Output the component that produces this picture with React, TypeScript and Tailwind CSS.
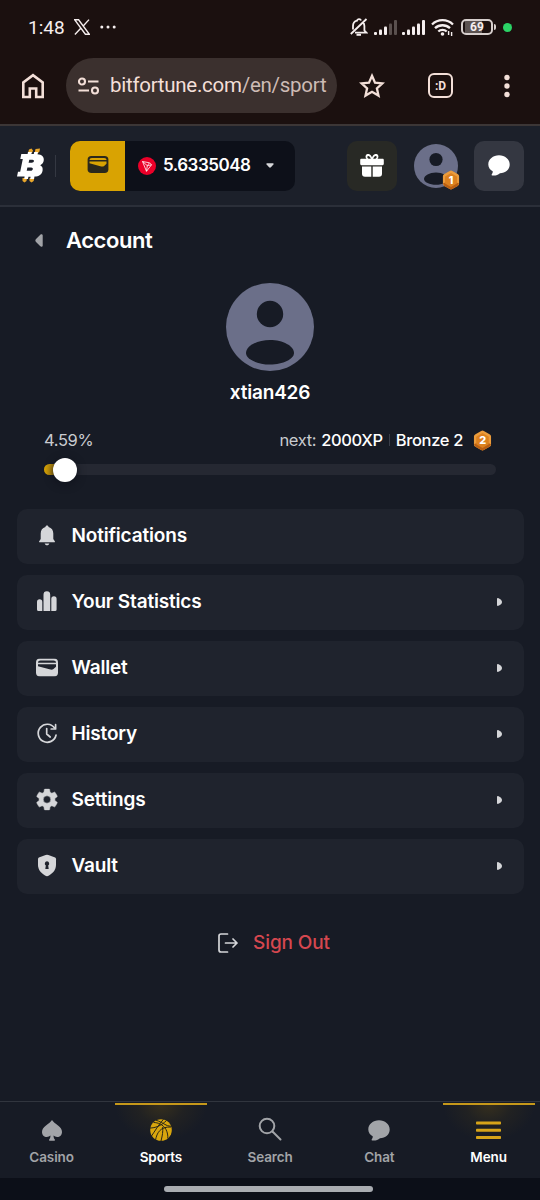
import type { ReactNode } from "react";

function Hexagon({ level, className }: { level: number; className: string }) {
    return (
        <svg viewBox="0 0 20 22" className={className}>
            <path d="M8.600.9a2.600 2.600 0 0 1 2.800 0l6 3.400A2.600 2.600 0 0 1 19 6.800v8.400a2.600 2.600 0 0 1-1.600 2.400l-6 3.500a2.600 2.600 0 0 1-2.800 0l-6-3.500A2.600 2.600 0 0 1 1 15.200V6.800a2.600 2.600 0 0 1 1.600-2.500z" fill="#eb9c3c" />
            <path d="M1 15l9-4 9 4-1.600 2.600-6 3.500a2.600 2.600 0 0 1-2.800 0l-6-3.500z" fill="#b95f12" />
            <path d="M10 3.200l6.600 3.800v8L10 18.800 3.400 15V7z" fill="#dc811f" />
            <text x="10" y="15" textAnchor="middle" fontSize="11.500" fontWeight="800" fontFamily="Inter, sans-serif" fill="#fff">{level}</text>
        </svg>
    );
}

function Avatar({ className }: { className: string }) {
    return (
        <svg viewBox="0 0 88 88" className={className}>
            <circle cx="44" cy="44" r="44" fill="#6b6f89" />
            <circle cx="44" cy="31" r="13.200" fill="#171b25" />
            <path d="M44 57c13 0 24 6 24 13 0 6-11 11.500-24 11.500S20 76 20 70c0-7 11-13 24-13z" fill="#171b25" />
        </svg>
    );
}

function WalletIcon({ fill, inner, className }: { fill: string; inner: string; className: string }) {
    return (
        <svg viewBox="0 0 22 18" className={className}>
            <rect width="22" height="18" rx="4" fill={fill} />
            <path d="M2 4.300C2 2.900 3 2 4.500 2h13C19 2 20 2.900 20 4.300z" fill={inner} />
            <path d="M2 5.800h18v2.400L17.500 10.500c-1 .7-2 .8-3.100.5L2 7.800z" fill={inner} />
        </svg>
    );
}

function ChatIcon({ className }: { className: string }) {
    return (
        <svg viewBox="0 0 22 21" className={className} fill="currentColor">
            <path d="M11 .3c6 0 10.700 4 10.700 9.100S17.500 18 12 18.200c-2.200 2-5 2.600-7.800 2.200-.7-.1-.8-.7-.4-1.200.7-.9 1.100-1.900.9-3C2 14.700.3 12.300.3 9.400.3 4.300 5 .3 11 .3z" />
        </svg>
    );
}

const menuItems: { label: string; arrow: boolean; icon: ReactNode }[] = [
    {
        label: "Notifications",
        arrow: false,
        icon: (
            <svg viewBox="0 0 22 22" className="h-[22px] w-[22px]" fill="#d5d6d9">
                <path d="M11 1c.9 0 1.500.6 1.600 1.500 3 .8 4.700 3.300 4.700 6.500v5.500l1.500 2.200c.4.600.1 1.100-.5 1.100H3.700c-.6 0-.9-.5-.5-1.100l1.500-2.200V9c0-3.200 1.700-5.700 4.700-6.500C9.500 1.600 10.100 1 11 1z" />
                <path d="M8.700 18.900h4.600c-.2 1.200-1.100 1.800-2.300 1.800s-2.100-.6-2.300-1.800z" />
            </svg>
        ),
    },
    {
        label: "Your Statistics",
        arrow: true,
        icon: (
            <svg viewBox="0 0 22 22" className="h-[22px] w-[22px]" fill="#d5d6d9">
                <path d="M1 11.500a2.600 2.600 0 0 1 5.300 0V20.500H2.500q-1.500 0-1.500-1.500zM7.500 4.200a3.300 3.300 0 0 1 6.700 0v16.300H7.500zM15.300 8.300a2.600 2.600 0 0 1 5.300 0V19q0 1.500-1.500 1.500h-3.800z" />
            </svg>
        ),
    },
    { label: "Wallet", arrow: true, icon: <WalletIcon fill="#d5d6d9" inner="#1f232d" className="h-[18px] w-[22px]" /> },
    {
        label: "History",
        arrow: true,
        icon: (
            <svg viewBox="0 0 22 22" className="h-[22px] w-[22px]" fill="none" stroke="#d5d6d9" strokeWidth="1.700" strokeLinecap="round" strokeLinejoin="round">
                <path d="M18.600 5.600A9 9 0 1 0 20 12.700" />
                <path d="M19.600 2.200v4.300h-4.400M10.700 6v5.500l3.500 3" />
            </svg>
        ),
    },
    {
        label: "Settings",
        arrow: true,
        icon: (
            <svg viewBox="2 2 20 20" className="h-[22px] w-[22px]" fill="#d5d6d9" stroke="#d5d6d9" strokeWidth=".5" strokeLinejoin="round">
                <path d="M19.140 12.940c.04-.3.060-.61.060-.94 0-.32-.02-.64-.07-.94l2.030-1.580a.49.49 0 0 0 .12-.61l-1.920-3.320a.488.488 0 0 0-.59-.22l-2.390.96c-.5-.38-1.030-.7-1.620-.94l-.36-2.540a.484.484 0 0 0-.48-.41h-3.840c-.24 0-.43.17-.47.41l-.36 2.540c-.59.24-1.130.57-1.620.94l-2.390-.96c-.22-.08-.47 0-.59.22L2.740 8.870c-.12.21-.08.47.12.61l2.030 1.580c-.05.3-.09.63-.09.94s.02.64.07.94l-2.030 1.580a.49.49 0 0 0-.12.61l1.920 3.320c.12.22.37.29.59.22l2.390-.96c.5.38 1.030.7 1.620.94l.36 2.540c.05.24.24.41.48.41h3.840c.24 0 .44-.17.47-.41l.36-2.540c.59-.24 1.130-.56 1.620-.94l2.390.96c.22.08.47 0 .59-.22l1.920-3.320a.49.49 0 0 0-.12-.61zM12 15.400A3.400 3.400 0 1 1 12 8.600a3.400 3.400 0 0 1 0 6.800z" />
            </svg>
        ),
    },
    {
        label: "Vault",
        arrow: true,
        icon: (
            <svg viewBox="0 0 22 22" className="h-[22px] w-[22px]">
                <path d="M11 0l7.500 2.700c1 .4 1.500 1 1.500 2.100v5.700c0 5-3.500 9-9 11.500-5.500-2.500-9-6.500-9-11.500V4.800c0-1.100.5-1.700 1.500-2.100z" fill="#d5d6d9" />
                <path d="M11 6.800a2.300 2.300 0 0 1 1.200 4.200l.5 3.500H9.300l.5-3.500A2.300 2.300 0 0 1 11 6.800z" fill="#1f232d" />
            </svg>
        ),
    },
];

const tabs: { label: string; active: boolean; icon: ReactNode }[] = [
    {
        label: "Casino",
        active: false,
        icon: (
            <svg viewBox="0 0 20 21" className="h-[21px] w-5" fill="#a2a4a8">
                <path d="M10 0c1 1.600 3.500 3.600 6 5.600 2.600 2 4 3.900 4 6.400 0 3-2.100 5-4.800 5-1.500 0-2.700-.5-3.700-1.400.1 2 .5 3.200 1.300 4 .5.500.2 1.200-.5 1.200H7.700c-.7 0-1-.7-.5-1.200.8-.8 1.200-2 1.300-4-1 .9-2.200 1.400-3.700 1.400C2.100 17 0 15 0 12c0-2.500 1.400-4.400 4-6.400 2.500-2 5-4 6-5.600z" />
            </svg>
        ),
    },
    {
        label: "Sports",
        active: true,
        icon: (
            <svg viewBox="0 0 22 22" className="h-[22px] w-[22px]">
                <circle cx="11" cy="11" r="10.800" fill="#d9a60d" />
                <path d="M3.500 3.500C8 3.500 13 5.500 16 10.500c1.500 3 2 6 1.800 9M0 9c5 0 11-2 16.500-7.500M6 1.200c3.500 1 7.500 3.500 10 4.800 2 1 4 1.300 6 1.200M1.500 17C5 12 8 6.500 13.500.2M5.500 21C7 14 10 7.500 21 8M11 22c1.500-6 2-9 1.700-14" fill="none" stroke="#292618" strokeWidth="1" />
            </svg>
        ),
    },
    {
        label: "Search",
        active: false,
        icon: (
            <svg viewBox="0 0 24 24" className="h-6 w-6 -translate-y-px" fill="none" stroke="#a2a4a8" strokeWidth="2" strokeLinecap="round">
                <circle cx="9" cy="9" r="7.300" />
                <path d="M14.500 14.500l8 8" />
            </svg>
        ),
    },
    { label: "Chat", active: false, icon: <ChatIcon className="h-[21px] w-[22px] text-[#a2a4a8]" /> },
    {
        label: "Menu",
        active: true,
        icon: (
            <svg viewBox="0 0 25 19" className="h-[19px] w-[25px]" fill="#d7a419">
                <rect width="25" height="3" rx=".8" y=".5" />
                <rect width="25" height="3" rx=".8" y="7.700" />
                <rect width="25" height="3" rx=".8" y="15" />
            </svg>
        ),
    },
];

function StatusBar() {
    return (
        <div className="flex h-[54px] items-center pl-7 pr-7 text-[#f5eeee]">
            <span className="w-[37px] whitespace-nowrap font-['Roboto'] text-[19px] leading-none">1:48</span>
            <svg viewBox="0 0 16 16" className="ml-[9px] h-4 w-4" fill="none" stroke="currentColor" strokeWidth="1.400">
                <path d="M.8.800h3.800l10.600 14.400h-3.800zM15 .6L9 7.300M7 9L.9 15.500" />
            </svg>
            <svg viewBox="0 0 16 4" className="ml-[10px] h-1 w-4" fill="currentColor">
                <circle cx="1.800" cy="2" r="1.500" />
                <circle cx="8" cy="2" r="1.500" />
                <circle cx="14.200" cy="2" r="1.500" />
            </svg>
            <div className="ml-auto flex items-center">
                <svg viewBox="0 0 18 18" className="h-[18px] w-[18px]" fill="none" stroke="currentColor" strokeWidth="1.800">
                    <path d="M3 11.500V8c0-3 1.600-4.700 4-5.300C7.200.8 10.500.6 11 2.500M13 4.500c1 1 1.400 2 1.400 3.500v4.500l2 2.200H5M.8 16L16.500 1" />
                    <path d="M6.500 16.800h4.500" strokeWidth="2" />
                </svg>
                <svg viewBox="0 0 23 15" className="ml-[6px] h-[15px] w-[23px]" fill="currentColor">
                    <rect x="0" y="12" width="3" height="3" rx="1" />
                    <rect x="5" y="9.500" width="3" height="5.500" rx="1" />
                    <rect x="10" y="6.500" width="3" height="8.500" rx="1" />
                    <rect x="15" y="3.500" width="3" height="11.500" rx="1" fill="#5a504e" />
                    <rect x="20" y="0" width="3" height="15" rx="1" fill="#5a504e" />
                </svg>
                <svg viewBox="0 0 23 15" className="ml-[5px] h-[15px] w-[23px]" fill="currentColor">
                    <rect x="0" y="12" width="3" height="3" rx="1" />
                    <rect x="5" y="9.500" width="3" height="5.500" rx="1" />
                    <rect x="10" y="6.500" width="3" height="8.500" rx="1" />
                    <rect x="15" y="3.500" width="3" height="11.500" rx="1" />
                    <rect x="20" y="0" width="3" height="15" rx="1" />
                </svg>
                <svg viewBox="0 0 23 17" className="ml-[6px] h-[17px] w-[23px]" fill="none" stroke="currentColor" strokeWidth="2.300">
                    <path d="M1 5.500a15 15 0 0 1 21 0M4 9.200a11 11 0 0 1 15 0M7.300 12.500a6 6 0 0 1 8.400 0" />
                    <circle cx="11.500" cy="15" r="1.800" fill="currentColor" stroke="none" />
                    <path d="M17.600 12v4M20.600 13v4" strokeWidth="1.400" />
                </svg>
                <div className="ml-[7px] flex h-4 w-8 items-center justify-center rounded-[5px] border-2 border-[#d7cfcd] bg-[linear-gradient(90deg,#1b100f_2px,#5b5250_2px,#5b5250_19px,#1b100f_19px)] font-['Roboto'] text-[12px] font-bold leading-none">69</div>
                <div className="ml-px h-[6px] w-[2px] rounded-r bg-[#d7cfcd]" />
            </div>
            <div className="ml-[7px] h-[9px] w-[9px] rounded-full bg-[#2bd466]" />
        </div>
    );
}

function BrowserBar() {
    return (
        <div className="flex h-[70px] items-center pt-[1px] pb-[8px] text-[#f3dfd8]">
            <svg viewBox="0 0 24 26" className="ml-[21px] h-[26px] w-6 shrink-0" fill="none" stroke="currentColor" strokeWidth="2.600">
                <path d="M2.300 24V9.500L12 2.200l9.700 7.300V24h-6.500v-8.500H8.800V24z" />
            </svg>
            <div className="ml-[21px] flex h-[55px] w-[271px] shrink-0 items-center rounded-full bg-[#3b302e] pl-3">
                <svg viewBox="0 0 22 18" className="h-[18px] w-[22px] shrink-0" fill="none" stroke="currentColor" strokeWidth="2.100">
                    <circle cx="4" cy="4.500" r="3" />
                    <path d="M10 4.500h10.500M.5 13.500H11" />
                    <circle cx="17" cy="13.500" r="3" />
                </svg>
                <span className="ml-[10px] whitespace-nowrap font-['Roboto'] text-[20.500px] tracking-[-0.270px]">
                    bitfortune.com<span className="text-[#cdbbb5]">/en/sport</span>
                </span>
            </div>
            <svg viewBox="0 0 26 26" className="ml-[22px] h-[26px] w-[26px] shrink-0" fill="none" stroke="currentColor" strokeWidth="2.300">
                <path d="M13 2.800l3 6.800 7.500.7-5.600 5 1.600 7.300-6.500-3.800-6.500 3.800 1.600-7.300-5.600-5 7.500-.7z" />
            </svg>
            <div className="ml-[43px] flex h-[25px] w-[25px] shrink-0 items-center justify-center rounded-[6px] border-2 border-[#f3dfd8] font-['Roboto'] text-[12px] font-bold leading-none">:D</div>
            <svg viewBox="0 0 6 24" className="ml-[51px] h-6 w-[6px] shrink-0" fill="currentColor">
                <circle cx="3" cy="3.500" r="2.700" />
                <circle cx="3" cy="12" r="2.700" />
                <circle cx="3" cy="20.500" r="2.700" />
            </svg>
        </div>
    );
}

function SiteHeader() {
    return (
        <header className="flex h-[83px] items-center border-y-2 border-t-[#3c3636] border-b-[#2b2f39] bg-[#1c202a] pl-[17px]">
            <svg viewBox="0 0 27 35" className="h-[35px] w-[27px] shrink-0">
                <path d="M12 1.500L14.500.5l1.500 2-1 2.500h-4zM18.500 1l4.500-.5-.5 3-2 2h-3zM5.500 30h4.500l-.5 3-2 1.500-2-1.500zM12.500 30h4.700l-.5 3-2.200 1.500-2-1.500z" fill="#e9a72c" />
                <path d="M11 4h3.800l-.4 2h2.400l.4-2h3.800l-.5 2.200c4.200.3 6.500 2.300 6.300 5.800-.2 2.600-1.500 4.300-3.600 5.200 2 1 2.800 2.700 2.400 5.300-.7 4-3.600 6-8.100 6.100l-.5 2.300h-3.800l.4-2.200h-2.200l-.4 2.200H7.200l.4-2.300H0l1-4.900h2.200l2.600-12.800H3.300l1-4.800H10.600zM12.300 11.800l-.7 3h3.200c2.500 0 3-3 .7-3zM10.400 19.500l-.7 3.300h3.900c2.600 0 3.100-3.300.6-3.300z" fill="#fff" fillRule="evenodd" />
            </svg>
            <div className="ml-[11px] h-[22px] w-px shrink-0 bg-[#343842]" />
            <div className="ml-[14px] flex h-[50px] w-[225px] shrink-0 overflow-hidden rounded-[10px] bg-[#0d1019]">
                <div className="flex w-[55px] items-center justify-center bg-[#d9a302]">
                    <WalletIcon fill="#2b281c" inner="#d9a302" className="h-[17px] w-[22px] -translate-y-px" />
                </div>
                <div className="flex flex-1 items-center pl-[13px]">
                    <svg viewBox="0 0 18 18" className="h-[18px] w-[18px]">
                        <circle cx="9" cy="9" r="9" fill="#eb0029" />
                        <path d="M4.500 4.500l7 1.300 2 2-5 6.500zl4.800 4.200-.8 5.600M9.300 8.700l2.200-2.900M9.300 8.700l4.200-.9" fill="none" stroke="#fff" strokeWidth=".8" strokeLinejoin="round" />
                    </svg>
                    <span className="ml-[7px] w-[87px] whitespace-nowrap text-[17px] font-semibold leading-none tracking-[-0.500px]">5.6335048</span>
                    <svg viewBox="0 0 9 6" className="ml-[16px] h-[5px] w-[8px]" fill="#d6d7da">
                        <path d="M1 .2h7c1 0 1.300.9.6 1.600L5.600 5.200c-.6.700-1.600.700-2.200 0L.4 1.800C-.3 1.100 0 .2 1 .2z" />
                    </svg>
                </div>
            </div>
            <div className="ml-[52px] flex h-[50px] w-[50px] shrink-0 items-center justify-center rounded-[10px] bg-[#282925]">
                <svg viewBox="0 0 24 24" className="h-6 w-6 -translate-y-px" fill="#fff">
                    <path d="M6.500 6C4 2.500 7 .3 9.300 1.300c1.300.5 2.200 1.700 2.700 3.200.5-1.500 1.400-2.700 2.700-3.200C17 .3 20 2.500 17.500 6h-2.200c2.700-2 .7-4-.8-2.500-.8.700-1.200 1.600-1.300 2.500h-2.400c-.1-.9-.5-1.800-1.300-2.500C8 2 6 4 8.700 6z" />
                    <path d="M1.500 5.700h21c.8 0 1.300.5 1.300 1.300v3.800c0 .8-.5 1.400-1.300 1.400h-21c-.8 0-1.300-.6-1.300-1.400V7c0-.8.5-1.300 1.300-1.300zM2 13.400h9.300v10.300H5c-2 0-3-1-3-3zM12.700 13.400H22v7.300c0 2-1 3-3 3h-6.300z" />
                </svg>
            </div>
            <div className="relative ml-[17px] shrink-0">
                <Avatar className="h-[44px] w-[44px]" />
                <Hexagon level={1} className="absolute -right-[2px] -bottom-[2px] h-5 w-[18px]" />
            </div>
            <div className="ml-[16px] flex h-[50px] w-[50px] shrink-0 items-center justify-center rounded-[10px] bg-[#343741]">
                <ChatIcon className="h-[21px] w-[22px] text-white" />
            </div>
        </header>
    );
}

export default function App() {
    return (
        <div className="flex h-[1200px] w-[540px] flex-col overflow-hidden bg-[#171b25] font-['Inter',sans-serif] text-white">
            <div className="h-[124px] shrink-0 bg-[#1b100f]">
                <StatusBar />
                <BrowserBar />
            </div>
            <SiteHeader />

            <main className="flex-1">
                <div className="flex h-[66px] items-center pl-[35px]">
                    <svg viewBox="0 0 8 14" className="h-[13px] w-2" fill="#a1a3a7">
                        <path d="M8 1.700v10.600c0 1.500-1.500 2-2.600 1L.8 8.700c-1-.9-1-2.500 0-3.400L5.400.7C6.500-.3 8 .2 8 1.700z" />
                    </svg>
                    <h1 className="ml-[23px] text-[22px] font-semibold tracking-[-0.450px]">Account</h1>
                </div>

                <div className="flex flex-col items-center pt-[10px]">
                    <Avatar className="h-[88px] w-[88px]" />
                    <p className="mt-2 text-[19px] font-semibold leading-7 tracking-[-0.200px]">xtian426</p>
                </div>

                <div className="mx-11 mt-[21px]">
                    <div className="flex h-6 items-center text-[16.500px] tracking-[-0.350px]">
                        <span className="text-[#c9cbd0]">4.59%</span>
                        <span className="ml-auto text-[#c9cbd0]">next:</span>
                        <span className="ml-[5px] font-medium">2000XP</span>
                        <span className="mx-[6px] h-3 w-px bg-[#3a3e49]" />
                        <span className="font-medium">Bronze 2</span>
                        <Hexagon level={2} className="mr-[4px] ml-[10px] h-[21px] w-[19px]" />
                    </div>
                    <div className="relative mt-3 h-[11px] rounded-full bg-[#252832]">
                        <div className="h-full w-5 rounded-l-full bg-linear-to-r from-[#d9a302] to-[#8b6b12]" />
                        <div className="absolute -top-[6px] left-[9px] h-6 w-6 rounded-full bg-white shadow-[0_2px_8px_#10131c]" />
                    </div>
                </div>

                <nav className="mt-[33.500px] flex flex-col gap-[11px] px-[16.500px]">
                    {menuItems.map((item) => (
                        <div key={item.label} className="flex h-[55px] items-center rounded-[10px] bg-[#1f232d] pr-[22px] pl-[19.500px]">
                            <div className="flex w-[22px] -translate-y-[0.500px] justify-center">{item.icon}</div>
                            <span className="ml-[13.500px] pt-px text-[19px] font-semibold tracking-[-0.170px]">{item.label}</span>
                            {item.arrow && (
                                <svg viewBox="0 0 5 8" className="ml-auto h-2 w-[5px]" fill="#d5d6d9">
                                    <path d="M0 .8C0 .1.700-.1 1.500.2 3.500 1 5 2.400 5 4S3.500 7 1.500 7.800C.7 8.100 0 7.900 0 7.200z" />
                                </svg>
                            )}
                        </div>
                    ))}
                </nav>

                <div className="mt-[35px] flex items-center justify-center gap-[15px] pl-2">
                    <svg viewBox="0 0 20 20" className="h-5 w-5" fill="none" stroke="#d5d6d9" strokeWidth="1.700" strokeLinecap="round" strokeLinejoin="round">
                        <path d="M9.500 1H3C1.700 1 1 1.700 1 3v14c0 1.300.7 2 2 2h6.500M7.500 10H19M15 6l4 4-4 4" />
                    </svg>
                    <span className="text-[19px] font-medium tracking-[-0.120px] text-[#d5474f]">Sign Out</span>
                </div>
            </main>

            <footer className="-ml-[3px] grid h-[77px] shrink-0 grid-cols-[repeat(5,109.250px)] border-t border-[#31353e] bg-[#171b25]">
                {tabs.map((tab) => (
                    <div key={tab.label} className="relative flex flex-col items-center">
                        {tab.active && (
                            <div className="absolute top-[1px] h-10 w-[92px] border-t-2 border-[#c6981a] bg-[radial-gradient(ellipse_46px_36px_at_top,#3d341ccc_0%,#2b281f80_50%,#171b2500_100%)]" />
                        )}
                        <div className="relative mt-4 flex h-6 items-center">{tab.icon}</div>
                        <span className={tab.active ? "relative mt-[5px] text-[13.500px] font-semibold tracking-[-0.100px] text-white" : "relative mt-[5px] text-[13.500px] font-semibold tracking-[-0.100px] text-[#a2a4a8]"}>
                            {tab.label}
                        </span>
                    </div>
                ))}
            </footer>
            <div className="flex h-[22px] shrink-0 justify-center bg-[#0c0f18] pt-[8px]">
                <div className="h-[6px] w-[209px] -translate-x-[2px] rounded-full bg-[#a9acb1]" />
            </div>
        </div>
    );
}
